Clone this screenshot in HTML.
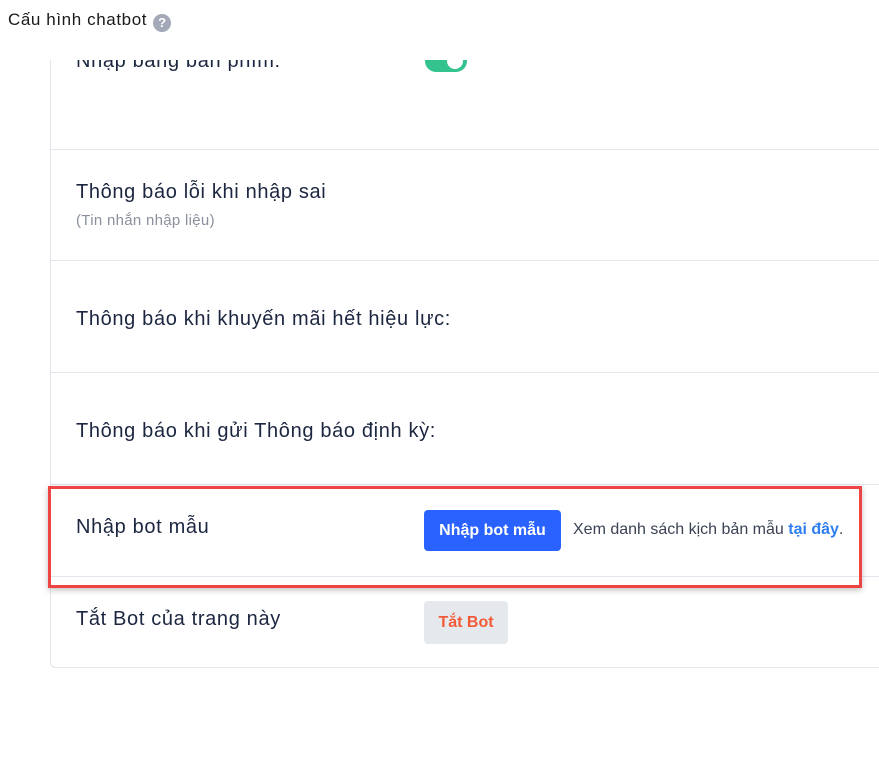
<!DOCTYPE html>
<html><head><meta charset="utf-8"><style>
*{margin:0;padding:0;box-sizing:border-box}
body{width:879px;height:776px;background:#fff;font-family:"Liberation Sans",sans-serif;position:relative;overflow:hidden;color:#1c2640}
.title{position:absolute;left:8px;top:10px;font-size:17px;color:#1a1a1a;letter-spacing:0.6px}
.q{display:inline-block;width:18px;height:18px;border-radius:50%;background:#a3a9b6;color:#fff;font-size:13px;font-weight:bold;text-align:center;line-height:18px;vertical-align:-2px;margin-left:6px;letter-spacing:0}
.clip{position:absolute;left:0;top:60px;width:879px;height:716px;overflow:hidden}
.card{position:absolute;left:50px;top:-100px;width:900px;height:708px;border-left:1px solid #e2e6ed;border-bottom:1px solid #e2e6ed;border-bottom-left-radius:6px}
.line{position:absolute;left:51px;right:0;height:1px;background:#e2e6ed}
.lbl{position:absolute;left:76px;font-size:20px;color:#1c2640;letter-spacing:0.65px}
.sub{position:absolute;left:76px;font-size:15px;color:#8a909c;letter-spacing:0.3px}
.tog{position:absolute;left:425px;top:-10px;width:42px;height:22px;border-radius:11px;background:#34c38f}
.tog:after{content:"";position:absolute;right:4px;top:3px;width:16px;height:16px;border-radius:50%;background:#fff}
.btn{position:absolute;left:424px;top:510px;width:137px;height:41px;border-radius:4px;background:#2962ff;color:#fff;font-weight:bold;font-size:16px;text-align:center;line-height:41px}
.txt{position:absolute;left:573px;top:521px;font-size:16px;color:#3a4254}
.txt b{color:#2f7ef0;font-weight:bold}
.btn2{position:absolute;left:424px;top:601px;width:84px;height:43px;border-radius:4px;background:#e5e8ec;color:#f25a38;font-weight:bold;font-size:16px;text-align:center;line-height:43px}
.red{position:absolute;left:48px;top:486px;width:814px;height:102px;border:3px solid #ee4444;box-shadow:0 2px 6px rgba(0,0,0,.25)}
</style></head><body>
<div class="title">Cấu hình chatbot<span class="q">?</span></div>
<div class="clip">
<div class="card"></div>
<div class="lbl" style="top:-10px">Nhập bằng bàn phím:</div>
<div class="tog"></div>
</div>
<div class="line" style="top:149px"></div>
<div class="lbl" style="top:181px">Thông báo lỗi khi nhập sai</div>
<div class="sub" style="top:212px">(Tin nhắn nhập liệu)</div>
<div class="line" style="top:260px"></div>
<div class="lbl" style="top:308px">Thông báo khi khuyến mãi hết hiệu lực:</div>
<div class="line" style="top:372px"></div>
<div class="lbl" style="top:420px">Thông báo khi gửi Thông báo định kỳ:</div>
<div class="line" style="top:484px"></div>
<div class="lbl" style="top:516px">Nhập bot mẫu</div>
<div class="btn">Nhập bot mẫu</div>
<div class="txt">Xem danh sách kịch bản mẫu <b>tại đây</b>.</div>
<div class="line" style="top:576px"></div>
<div class="lbl" style="top:608px">Tắt Bot của trang này</div>
<div class="btn2">Tắt Bot</div>
<div class="red"></div>
</body></html>
